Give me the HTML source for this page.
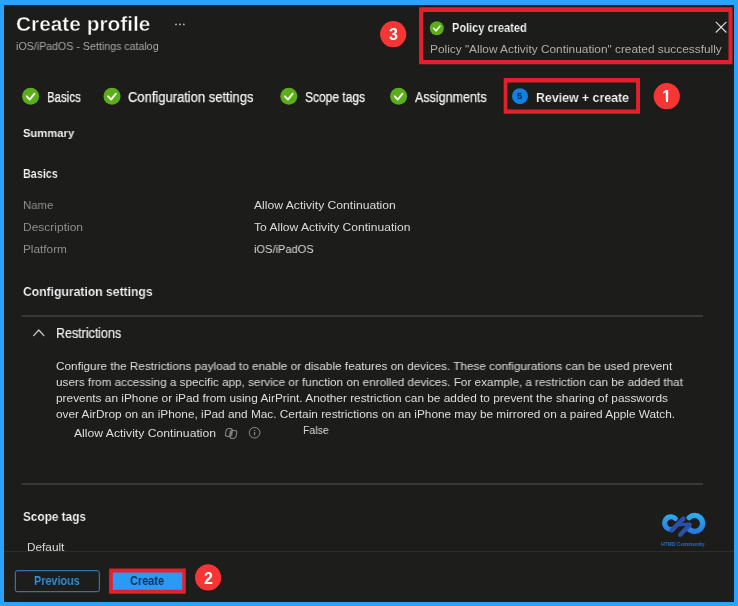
<!DOCTYPE html>
<html lang="en">
<head>
<meta charset="utf-8">
<title>Create profile</title>
<style>
html,body{margin:0;padding:0;}
body{width:738px;height:606px;overflow:hidden;background:#2ba3fb;font-family:"Liberation Sans", sans-serif;position:relative;}
#panel{position:absolute;left:4px;top:5px;width:730px;height:596.5px;background:#1c1d1b;}
#footer{position:absolute;left:4px;top:551px;width:730px;height:50.5px;background:#1d1e1c;border-top:1px solid #2e2d2a;box-sizing:border-box;}
.t{will-change:transform;position:absolute;white-space:nowrap;line-height:0;transform-origin:0 0;}
svg{position:absolute;left:0;top:0;}
</style>
</head>
<body>
<div id="panel"></div>
<div id="footer"></div>
<svg width="738" height="606" viewBox="0 0 738 606">
<rect x="21.7" y="315.35" width="681.5" height="1.3" fill="#4b4b49"/>
<rect x="21.7" y="483.35" width="681.5" height="1.3" fill="#4b4b49"/>
<rect x="112" y="572" width="71" height="18.4" fill="#2a9af5"/>
<path fill-rule="evenodd" fill="#e3202b" d="M109.1 568.6H185.8V593.8H109.1Z M112.8 572.5H182.3V589.8H112.8Z"/>
<path fill-rule="evenodd" fill="#e3202b" d="M419.1 7.3H732.5V64.3H419.1Z M423.3 11.9H728.5V60.0H423.3Z"/>
<path fill-rule="evenodd" fill="#e3202b" d="M503.7 78.1H640.0V113.8H503.7Z M507.4 82.4H636.1V109.6H507.4Z"/>
<rect x="15.3" y="570.7" width="84" height="21" rx="2" fill="none" stroke="#3f86c4" stroke-width="1"/>
<circle cx="393.2" cy="34.2" r="13.1" fill="#f83535"/>
<circle cx="666.8" cy="96.2" r="13.1" fill="#f83535"/>
<circle cx="208.1" cy="577.4" r="13.1" fill="#f83535"/>
<circle cx="30.6" cy="96.3" r="8.5" fill="#5bae1a"/><path d="M26.69 96.40 L29.72 99.52 L34.51 93.66" fill="none" stroke="#f4ffe8" stroke-width="1.95" stroke-linecap="round" stroke-linejoin="round"/>
<circle cx="112.0" cy="96.3" r="8.5" fill="#5bae1a"/><path d="M108.09 96.40 L111.12 99.52 L115.91 93.66" fill="none" stroke="#f4ffe8" stroke-width="1.95" stroke-linecap="round" stroke-linejoin="round"/>
<circle cx="288.8" cy="96.3" r="8.5" fill="#5bae1a"/><path d="M284.89 96.40 L287.92 99.52 L292.71 93.66" fill="none" stroke="#f4ffe8" stroke-width="1.95" stroke-linecap="round" stroke-linejoin="round"/>
<circle cx="398.6" cy="96.3" r="8.5" fill="#5bae1a"/><path d="M394.69 96.40 L397.72 99.52 L402.51 93.66" fill="none" stroke="#f4ffe8" stroke-width="1.95" stroke-linecap="round" stroke-linejoin="round"/>
<circle cx="436.8" cy="28.2" r="7.0" fill="#5bae1a"/><path d="M433.58 28.28 L436.08 30.86 L440.02 26.03" fill="none" stroke="#f4ffe8" stroke-width="1.61" stroke-linecap="round" stroke-linejoin="round"/>
<circle cx="520.0" cy="96.2" r="8.0" fill="#1280dd"/>
<path d="M715.8 21.9 L726.4 32.5 M726.4 21.9 L715.8 32.5" stroke="#d8d8d8" stroke-width="1.2" fill="none"/>
<circle cx="176.0" cy="24.4" r="0.95" fill="#b4b4b4"/>
<circle cx="179.9" cy="24.4" r="0.95" fill="#b4b4b4"/>
<circle cx="183.8" cy="24.4" r="0.95" fill="#b4b4b4"/>
<path d="M33.7 335.7 L38.8 330.0 L43.9 335.7" stroke="#d0d0d0" stroke-width="1.2" fill="none" stroke-linecap="round" stroke-linejoin="round"/>
<circle cx="254.6" cy="432.7" r="5.3" fill="none" stroke="#8e8e8e" stroke-width="1"/>
<path d="M254.6 432.0 L254.6 435.3" stroke="#8e8e8e" stroke-width="1.1"/><circle cx="254.6" cy="430.4" r="0.65" fill="#8e8e8e"/>
<g transform="translate(231.1 433.4) skewX(-10) translate(-231.1 -433.4)" fill="none" stroke="#868686" stroke-width="1.05"><rect x="229.2" y="430.2" width="3.6" height="6.2" fill="#555553" stroke="none"/><rect x="225.6" y="428.4" width="6.0" height="8.0" rx="2.3"/><rect x="230.4" y="430.4" width="6.2" height="8.0" rx="2.3"/></g>
<g>
<defs>
<linearGradient id="lg1" gradientUnits="userSpaceOnUse" x1="0" y1="513" x2="0" y2="534"><stop offset="0" stop-color="#2eb0f0"/><stop offset="1" stop-color="#2a74dc"/></linearGradient>
</defs>
<path d="M675.4 518.6 A6.3 6.3 0 1 0 672.4 529.2" fill="none" stroke="url(#lg1)" stroke-width="5.0" stroke-linecap="round"/>
<path d="M689.2 517.6 A8.0 8.0 0 1 1 689.6 529.6" fill="none" stroke="url(#lg1)" stroke-width="5.4" stroke-linecap="round"/>
<path d="M671.6 530.4 L683.4 518.6" fill="none" stroke="#2b50a6" stroke-width="4.4" stroke-linecap="round"/>
<path d="M680.2 534.8 L689.6 525.0" fill="none" stroke="#2b50a6" stroke-width="4.4" stroke-linecap="round"/>
<path d="M679.6 524.6 L690.0 524.2" fill="none" stroke="#2b50a6" stroke-width="3.2" stroke-linecap="round"/>
</g>
</svg>
<span class="t" style="left:15.90px;top:24.00px;font-size:20.8px;font-weight:700;color:#ffffff;-webkit-text-stroke:0.45px #1c1d1b;transform:scaleX(1.0023)">Create profile</span>
<span class="t" style="left:15.90px;top:45.60px;font-size:10.8px;font-weight:400;color:#a9a9a9;transform:scaleX(0.9860)">iOS/iPadOS - Settings catalog</span>
<span class="t" style="left:451.80px;top:28.40px;font-size:12.6px;font-weight:700;color:#ffffff;-webkit-text-stroke:0.2px #1c1d1b;transform:scaleX(0.8748)">Policy created</span>
<span class="t" style="left:429.50px;top:49.00px;font-size:11.6px;font-weight:400;color:#adadad;transform:scaleX(1.0225)">Policy "Allow Activity Continuation" created successfully</span>
<span class="t" style="left:46.78px;top:96.90px;font-size:14.0px;font-weight:400;color:#f2f2f2;-webkit-text-stroke:0.25px #f2f2f2;transform:scaleX(0.8177)">Basics</span>
<span class="t" style="left:128.40px;top:96.90px;font-size:14.0px;font-weight:400;color:#f2f2f2;-webkit-text-stroke:0.25px #f2f2f2;transform:scaleX(0.9261)">Configuration settings</span>
<span class="t" style="left:305.40px;top:96.90px;font-size:14.0px;font-weight:400;color:#f2f2f2;-webkit-text-stroke:0.25px #f2f2f2;transform:scaleX(0.8580)">Scope tags</span>
<span class="t" style="left:415.40px;top:96.90px;font-size:14.0px;font-weight:400;color:#f2f2f2;-webkit-text-stroke:0.25px #f2f2f2;transform:scaleX(0.8934)">Assignments</span>
<span class="t" style="left:536.20px;top:97.90px;font-size:13.6px;font-weight:700;color:#ffffff;-webkit-text-stroke:0.2px #1c1d1b;transform:scaleX(0.9082)">Review + create</span>
<span class="t" style="left:22.50px;top:133.30px;font-size:11.8px;font-weight:700;color:#ffffff;-webkit-text-stroke:0.12px #1c1d1b;transform:scaleX(0.9519)">Summary</span>
<span class="t" style="left:22.90px;top:173.60px;font-size:13.3px;font-weight:700;color:#ffffff;-webkit-text-stroke:0.2px #1c1d1b;transform:scaleX(0.8121)">Basics</span>
<span class="t" style="left:22.70px;top:205.00px;font-size:11.8px;font-weight:400;color:#8e8e8e;transform:scaleX(0.9622)">Name</span>
<span class="t" style="left:22.70px;top:227.00px;font-size:11.8px;font-weight:400;color:#8e8e8e;transform:scaleX(1.0163)">Description</span>
<span class="t" style="left:22.70px;top:249.00px;font-size:11.8px;font-weight:400;color:#8e8e8e;transform:scaleX(0.9956)">Platform</span>
<span class="t" style="left:254.00px;top:205.00px;font-size:11.8px;font-weight:400;color:#dadada;transform:scaleX(1.0298)">Allow Activity Continuation</span>
<span class="t" style="left:254.00px;top:227.00px;font-size:11.8px;font-weight:400;color:#dadada;transform:scaleX(1.0233)">To Allow Activity Continuation</span>
<span class="t" style="left:254.00px;top:249.00px;font-size:11.8px;font-weight:400;color:#dadada;transform:scaleX(0.9383)">iOS/iPadOS</span>
<span class="t" style="left:22.90px;top:292.00px;font-size:13.3px;font-weight:700;color:#ffffff;-webkit-text-stroke:0.2px #1c1d1b;transform:scaleX(0.9135)">Configuration settings</span>
<span class="t" style="left:55.60px;top:334.00px;font-size:13.8px;font-weight:400;color:#f0f0f0;-webkit-text-stroke:0.2px #f0f0f0;transform:scaleX(0.9035)">Restrictions</span>
<span class="t" style="left:56.10px;top:366.00px;font-size:11.8px;font-weight:400;color:#dedede;transform:scaleX(0.9967)">Configure the Restrictions payload to enable or disable features on devices. These configurations can be used prevent</span>
<span class="t" style="left:56.10px;top:382.20px;font-size:11.8px;font-weight:400;color:#dedede;transform:scaleX(0.9928)">users from accessing a specific app, service or function on enrolled devices. For example, a restriction can be added that</span>
<span class="t" style="left:56.10px;top:398.40px;font-size:11.8px;font-weight:400;color:#dedede;transform:scaleX(1.0057)">prevents an iPhone or iPad from using AirPrint. Another restriction can be added to prevent the sharing of passwords</span>
<span class="t" style="left:56.10px;top:414.30px;font-size:11.8px;font-weight:400;color:#dedede;transform:scaleX(1.0008)">over AirDrop on an iPhone, iPad and Mac. Certain restrictions on an iPhone may be mirrored on a paired Apple Watch.</span>
<span class="t" style="left:73.70px;top:433.40px;font-size:11.8px;font-weight:400;color:#dedede;transform:scaleX(1.0313)">Allow Activity Continuation</span>
<span class="t" style="left:303.30px;top:430.40px;font-size:11.5px;font-weight:400;color:#d8d8d8;transform:scaleX(0.9125)">False</span>
<span class="t" style="left:22.90px;top:517.10px;font-size:13.3px;font-weight:700;color:#ffffff;-webkit-text-stroke:0.2px #1c1d1b;transform:scaleX(0.8874)">Scope tags</span>
<span class="t" style="left:27.40px;top:546.70px;font-size:11.8px;font-weight:400;color:#dadada;transform:scaleX(0.9947)">Default</span>
<span class="t" style="left:34.40px;top:581.40px;font-size:12.3px;font-weight:700;color:#3596e6;-webkit-text-stroke:0.15px #1c1d1b;transform:scaleX(0.8809)">Previous</span>
<span class="t" style="left:129.60px;top:581.40px;font-size:12.5px;font-weight:700;color:#0d2440;-webkit-text-stroke:0.15px #2a9af5;transform:scaleX(0.8753)">Create</span>
<span class="t" style="left:661.00px;top:543.80px;font-size:5.8px;font-weight:700;color:#2a6cc2;transform:scaleX(0.8665)">HTMD Community</span>
<span class="t" style="left:388.70px;top:35.20px;font-size:16px;font-weight:700;color:#ffffff">3</span>
<span class="t" style="left:662.10px;top:96.20px;font-size:16.5px;font-weight:700;color:#ffffff">1</span>
<span class="t" style="left:203.60px;top:578.90px;font-size:16px;font-weight:700;color:#ffffff">2</span>
<span class="t" style="left:516.80px;top:95.70px;font-size:9.6px;font-weight:700;color:#0b2a63">5</span>
<svg width="738" height="606" viewBox="0 0 738 606" style="pointer-events:none">
<rect x="662.4" y="99.6" width="3.6" height="3" fill="#f83535"/>
<rect x="668" y="99.6" width="3.4" height="3" fill="#f83535"/>
</svg>
</body>
</html>
